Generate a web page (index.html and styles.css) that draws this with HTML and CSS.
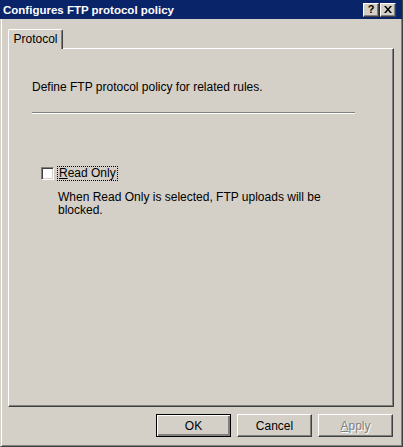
FILE: index.html
```html
<!DOCTYPE html>
<html lang="en">
<head>
  <meta charset="UTF-8" />
  <title>Configures FTP protocol policy</title>
  <link rel="stylesheet" href="styles.css">
</head>
<body>
  <div class="window">
    <div class="titlebar">
      <span class="titlebar__text">Configures FTP protocol policy</span>
      <div class="titlebar__buttons">
        <span class="caption-btn caption-btn--help">?</span>
        <span class="caption-btn caption-btn--close">
          <svg width="8" height="7" viewBox="0 0 8 7">
            <path d="M0 0h2l2 2.5L6 0h2L5 3.5 8 7H6L4 4.5 2 7H0l3-3.5z" fill="#000"/>
          </svg>
        </span>
      </div>
    </div>

    <div class="tabs">
      <div class="tab tab--active">Protocol</div>
    </div>

    <div class="panel">
      <p class="panel__intro">Define FTP protocol policy for related rules.</p>
      <div class="separator"></div>

      <div class="option">
        <span class="checkbox"></span>
        <span class="option__label"><u>R</u>ead Only</span>
      </div>
      <p class="option__desc">When Read Only is selected, FTP uploads will be blocked.</p>
    </div>

    <div class="footer">
      <button class="btn btn--default">OK</button>
      <button class="btn">Cancel</button>
      <button class="btn btn--disabled"><u>A</u>pply</button>
    </div>
  </div>
</body>
</html>
```

FILE: styles.css
```css
body {
  margin: 0;
  background: #d4d0c8;
  font-family: 'Liberation Sans', Arial, sans-serif;
  font-size: 12px;
  color: #000;
}
.window {
  width: 403px;
  height: 447px;
  box-sizing: border-box;
  display: flex;
  flex-direction: column;
  background: #d4d0c8;
  border-left: 1px solid #d4d0c8;
  border-right: 1px solid #404040;
  border-bottom: 1px solid #404040;
  box-shadow: inset 1px 0 #fff, inset -1px -1px #808080;
}

/* barre de titre */
.titlebar {
  height: 19px;
  margin: 0 0 0 -1px;
  background: #0a246a;
  display: flex;
  align-items: center;
  justify-content: space-between;
  padding: 0 6px 0 3px;
}
.titlebar__text {
  color: #fff;
  font-weight: bold;
  font-size: 11.5px;
}
.titlebar__buttons {
  display: flex;
  gap: 1px;
}
.caption-btn {
  width: 16px;
  height: 14px;
  box-sizing: border-box;
  background: #d4d0c8;
  border-top: 1px solid #fff;
  border-left: 1px solid #fff;
  border-right: 1px solid #404040;
  border-bottom: 1px solid #404040;
  box-shadow: inset -1px -1px #808080;
  display: flex;
  align-items: center;
  justify-content: center;
}
.caption-btn--help {
  font-weight: bold;
  font-size: 11px;
  line-height: 1;
}

/* onglets */
.tabs {
  display: flex;
  padding: 9px 0 0 7px;
}
.tab {
  width: 55px;
  height: 20px;
  box-sizing: border-box;
  border-top: 1px solid #fff;
  border-left: 1px solid #fff;
  border-right: 1px solid #404040;
  box-shadow: inset -1px 0 #808080;
  border-radius: 2px 2px 0 0;
  text-align: center;
  line-height: 18px;
  position: relative;
  top: 1px;
  background: #d4d0c8;
}

.panel {
  margin: 0 8px 0 7px;
  height: 359px;
  box-sizing: border-box;
  border-top: 1px solid #fff;
  border-left: 1px solid #fff;
  border-right: 1px solid #404040;
  border-bottom: 1px solid #404040;
  box-shadow: inset -1px -1px #808080;
  padding: 32px 0 0 23px;
}
.panel__intro {
  margin: 0;
  line-height: 13px;
}
.separator {
  width: 323px;
  height: 1px;
  margin-top: 18px;
  background: #808080;
  border-bottom: 1px solid #fff;
}
.option {
  display: flex;
  align-items: center;
  margin: 52px 0 0 9px;
  height: 15px;
}
.checkbox {
  width: 13px;
  height: 13px;
  box-sizing: border-box;
  background: #fff;
  border-top: 1px solid #808080;
  border-left: 1px solid #808080;
  border-right: 1px solid #fff;
  border-bottom: 1px solid #fff;
  box-shadow: inset 1px 1px #404040, inset -1px -1px #d4d0c8;
}
.option__label {
  margin-left: 4px;
  padding: 0 1px;
  outline: 1px dotted #000;
  line-height: 13px;
}
.option__desc {
  margin: 10px 0 0 26px;
  width: 280px;
  line-height: 13px;
}

/* boutons */
.footer {
  display: flex;
  justify-content: flex-end;
  gap: 6px;
  padding: 7px 9px 0 0;
}
.btn {
  width: 75px;
  height: 23px;
  box-sizing: border-box;
  background: #d4d0c8;
  font-family: inherit;
  font-size: 12px;
  color: #000;
  border-top: 1px solid #fff;
  border-left: 1px solid #fff;
  border-right: 1px solid #404040;
  border-bottom: 1px solid #404040;
  box-shadow: inset -1px -1px #808080;
  padding: 0;
}
.btn--default {
  border: 1px solid #000;
  box-shadow: inset 1px 1px #fff, inset -2px -2px #808080, inset -1px -1px #404040;
}
.btn--disabled {
  color: #808080;
  text-shadow: 1px 1px #fff;
}
```
